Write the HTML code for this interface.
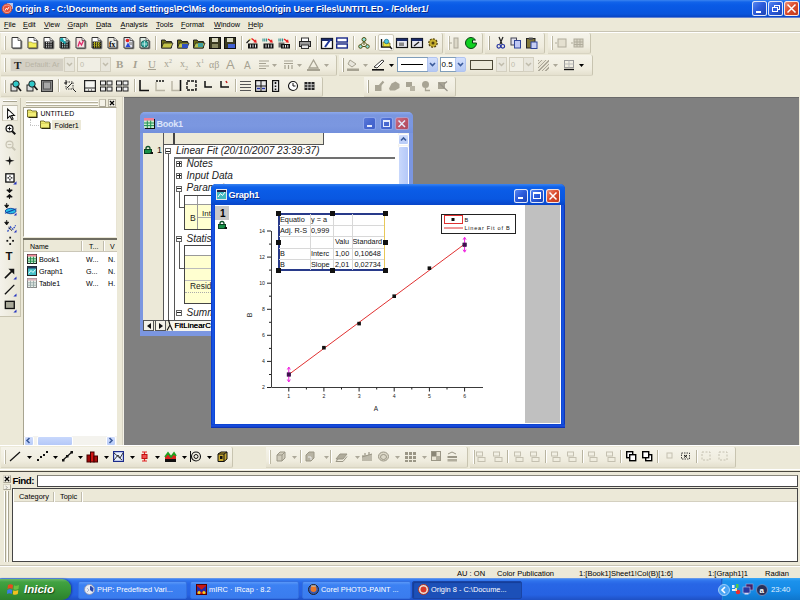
<!DOCTYPE html>
<html><head><meta charset="utf-8"><title>Origin 8</title>
<style>
html,body{margin:0;padding:0}
body{width:800px;height:600px;position:relative;overflow:hidden;background:#ECE9D8;font-family:"Liberation Sans",sans-serif}
body>div,body>span,body>svg{position:absolute;display:block}
span{white-space:nowrap}
svg{overflow:visible}
sup,sub{line-height:0}
</style></head><body>
<div style="left:0px;top:0px;width:800px;height:18px;background:linear-gradient(#3a84f0 0,#1264ea 2px,#0a5be6 5px,#0957e1 11px,#0a55dc 14px,#0848c8 16.500px,#0a40b8 17px,#5a7cd0 17.050px,#6a88d4 18px)"></div>
<svg style="left:2px;top:3px" width="11" height="11" viewBox="0 0 11 11"><rect x="5" y="0" width="6" height="6" fill="#b8c8f0"/><circle cx="5" cy="5.800" r="4.800" fill="#f0a090" stroke="#d04830" stroke-width="1"/><circle cx="5" cy="5.800" r="3.300" fill="#e85038"/><path d="M3 7.500 L4.500 5 L5.500 6.500 L7 4" stroke="#fff" stroke-width=".9" fill="none"/></svg>
<span style="left:15px;top:3.0px;font-size:8.98px;line-height:12px;color:#fff;font-weight:bold;text-shadow:1px 1px 0 #0a2a8a">Origin 8 - C:\Documents and Settings\PC\Mis documentos\Origin User Files\UNTITLED - /Folder1/</span>
<div style="left:752px;top:1px;width:15px;height:15px;background:linear-gradient(135deg,#5888f0,#2c5cdc 45%,#1c44b4);border:1px solid rgba(255,255,255,.85);border-radius:2.5px;box-sizing:border-box;"></div>
<div style="left:755.5px;top:10.5px;width:5px;height:2px;background:#fff"></div>
<div style="left:768px;top:1px;width:15px;height:15px;background:linear-gradient(135deg,#5888f0,#2c5cdc 45%,#1c44b4);border:1px solid rgba(255,255,255,.85);border-radius:2.5px;box-sizing:border-box;"></div>
<div style="left:773.5px;top:4.5px;width:6px;height:5px;border:1px solid #fff;border-top:1.500px solid #fff;box-sizing:border-box"></div>
<div style="left:771.5px;top:7px;width:6px;height:5px;border:1px solid #fff;border-top:1.500px solid #fff;box-sizing:border-box;background:#2c5cdc"></div>
<div style="left:784px;top:1px;width:15px;height:15px;background:linear-gradient(135deg,#ec9078,#dc4c2c 45%,#c03a1c);border:1px solid rgba(255,255,255,.85);border-radius:2.5px;box-sizing:border-box;"></div>
<svg style="left:787px;top:4px" width="9" height="9" viewBox="0 0 9 9"><path d="M.5 .5 L8.5 8.5 M8.5 .5 L.5 8.5" stroke="#fff" stroke-width="1.500"/></svg>
<div style="left:0px;top:18px;width:800px;height:14px;background:#ECE9D8"></div>
<span style="left:4px;top:19.0px;font-size:7.3px;line-height:11px;color:#000"><u style="text-decoration-thickness:.7px;text-decoration-color:#444">F</u>ile</span>
<span style="left:23px;top:19.0px;font-size:7.3px;line-height:11px;color:#000"><u style="text-decoration-thickness:.7px;text-decoration-color:#444">E</u>dit</span>
<span style="left:44px;top:19.0px;font-size:7.3px;line-height:11px;color:#000"><u style="text-decoration-thickness:.7px;text-decoration-color:#444">V</u>iew</span>
<span style="left:67.5px;top:19.0px;font-size:7.3px;line-height:11px;color:#000"><u style="text-decoration-thickness:.7px;text-decoration-color:#444">G</u>raph</span>
<span style="left:96px;top:19.0px;font-size:7.3px;line-height:11px;color:#000"><u style="text-decoration-thickness:.7px;text-decoration-color:#444">D</u>ata</span>
<span style="left:120.5px;top:19.0px;font-size:7.3px;line-height:11px;color:#000"><u style="text-decoration-thickness:.7px;text-decoration-color:#444">A</u>nalysis</span>
<span style="left:156px;top:19.0px;font-size:7.3px;line-height:11px;color:#000"><u style="text-decoration-thickness:.7px;text-decoration-color:#444">T</u>ools</span>
<span style="left:181px;top:19.0px;font-size:7.3px;line-height:11px;color:#000"><u style="text-decoration-thickness:.7px;text-decoration-color:#444">F</u>ormat</span>
<span style="left:214px;top:19.0px;font-size:7.3px;line-height:11px;color:#000"><u style="text-decoration-thickness:.7px;text-decoration-color:#444">W</u>indow</span>
<span style="left:248px;top:19.0px;font-size:7.3px;line-height:11px;color:#000"><u style="text-decoration-thickness:.7px;text-decoration-color:#444">H</u>elp</span>
<div style="left:0px;top:31px;width:800px;height:1px;background:#c8c4b4"></div>
<div style="left:0px;top:32px;width:800px;height:1px;background:#fff"></div>
<div style="left:0px;top:33px;width:800px;height:64px;background:#ECE9D8"></div>
<div style="left:1px;top:33px;width:442px;height:21px;background:linear-gradient(#f5f3ea,#efecde 70%,#e4e0ce);border-right:1px solid #c8c4b0;border-bottom:1px solid #d8d4c2;box-sizing:border-box;border-radius:0 2px 2px 0"></div>
<div style="left:4px;top:36px;width:1px;height:14px;background:#fff;border-right:1px solid #bcb8a4"></div>
<div style="left:445px;top:33px;width:38px;height:21px;background:linear-gradient(#f5f3ea,#efecde 70%,#e4e0ce);border-right:1px solid #c8c4b0;border-bottom:1px solid #d8d4c2;box-sizing:border-box;border-radius:0 2px 2px 0"></div>
<div style="left:448px;top:36px;width:1px;height:14px;background:#fff;border-right:1px solid #bcb8a4"></div>
<div style="left:485px;top:33px;width:60px;height:21px;background:linear-gradient(#f5f3ea,#efecde 70%,#e4e0ce);border-right:1px solid #c8c4b0;border-bottom:1px solid #d8d4c2;box-sizing:border-box;border-radius:0 2px 2px 0"></div>
<div style="left:488px;top:36px;width:1px;height:14px;background:#fff;border-right:1px solid #bcb8a4"></div>
<div style="left:548px;top:33px;width:43px;height:21px;background:linear-gradient(#f5f3ea,#efecde 70%,#e4e0ce);border-right:1px solid #c8c4b0;border-bottom:1px solid #d8d4c2;box-sizing:border-box;border-radius:0 2px 2px 0"></div>
<div style="left:551px;top:36px;width:1px;height:14px;background:#fff;border-right:1px solid #bcb8a4"></div>
<div style="left:488px;top:36px;width:1px;height:14px;background:#fff;border-right:1px solid #a8a490"></div>
<div style="left:1px;top:55px;width:336px;height:21px;background:linear-gradient(#f5f3ea,#efecde 70%,#e4e0ce);border-right:1px solid #c8c4b0;border-bottom:1px solid #d8d4c2;box-sizing:border-box;border-radius:0 2px 2px 0"></div>
<div style="left:4px;top:58px;width:1px;height:14px;background:#fff;border-right:1px solid #bcb8a4"></div>
<div style="left:339px;top:55px;width:254px;height:21px;background:linear-gradient(#f5f3ea,#efecde 70%,#e4e0ce);border-right:1px solid #c8c4b0;border-bottom:1px solid #d8d4c2;box-sizing:border-box;border-radius:0 2px 2px 0"></div>
<div style="left:342px;top:58px;width:1px;height:14px;background:#fff;border-right:1px solid #bcb8a4"></div>
<div style="left:342px;top:58px;width:1px;height:14px;background:#fff;border-right:1px solid #a8a490"></div>
<div style="left:1px;top:77px;width:322px;height:20px;background:linear-gradient(#f5f3ea,#efecde 70%,#e4e0ce);border-right:1px solid #c8c4b0;border-bottom:1px solid #d8d4c2;box-sizing:border-box;border-radius:0 2px 2px 0"></div>
<div style="left:4px;top:80px;width:1px;height:13px;background:#fff;border-right:1px solid #bcb8a4"></div>
<div style="left:364px;top:77px;width:92px;height:20px;background:linear-gradient(#f5f3ea,#efecde 70%,#e4e0ce);border-right:1px solid #c8c4b0;border-bottom:1px solid #d8d4c2;box-sizing:border-box;border-radius:0 2px 2px 0"></div>
<div style="left:367px;top:80px;width:1px;height:13px;background:#fff;border-right:1px solid #bcb8a4"></div>
<div style="left:367px;top:80px;width:1px;height:13px;background:#fff;border-right:1px solid #a8a490"></div>
<svg style="left:11px;top:37px" width="12" height="12" viewBox="0 0 12 12"><path d="M10.800 4 V11.700 H2" stroke="#666" fill="none" stroke-width="1"/><path d="M1 .5 H7 L10 3.500 V11 H1Z" fill="#fff" stroke="#333" stroke-width="1"/><path d="M7 .5 V3.500 H10" fill="#e0e0e0" stroke="#333" stroke-width=".7"/></svg>
<svg style="left:27px;top:37px" width="12" height="12" viewBox="0 0 12 12"><path d="M10.800 4 V11.700 H2" stroke="#666" fill="none" stroke-width="1"/><path d="M1 .5 H7 L10 3.500 V11 H1Z" fill="#fff" stroke="#333" stroke-width="1"/><path d="M7 .5 V3.500 H10" fill="#e0e0e0" stroke="#333" stroke-width=".7"/><path d="M1.500 5 H4.500 L5.500 6 H9.500 V10.500 H1.500Z" fill="#f2ee5c" stroke="#8a8220" stroke-width=".6"/></svg>
<svg style="left:43px;top:37px" width="12" height="12" viewBox="0 0 12 12"><path d="M10.800 4 V11.700 H2" stroke="#666" fill="none" stroke-width="1"/><path d="M1 .5 H7 L10 3.500 V11 H1Z" fill="#fff" stroke="#333" stroke-width="1"/><path d="M7 .5 V3.500 H10" fill="#e0e0e0" stroke="#333" stroke-width=".7"/><rect x="1.500" y="4.500" width="8.500" height="6.500" fill="#1c1c1c"/><path d="M3.600 5 V11 M5.800 5 V11 M8 5 V11" stroke="#e8e8e8" stroke-width="1" stroke-dasharray="1.300 .8"/></svg>
<svg style="left:59px;top:37px" width="12" height="12" viewBox="0 0 12 12"><path d="M10.800 4 V11.700 H2" stroke="#666" fill="none" stroke-width="1"/><path d="M1 .5 H7 L10 3.500 V11 H1Z" fill="#dff" stroke="#333" stroke-width="1"/><path d="M7 .5 V3.500 H10" fill="#e0e0e0" stroke="#333" stroke-width=".7"/><rect x="1.500" y="4.500" width="8.500" height="6.500" fill="#1c1c1c"/><path d="M3.600 5 V11 M5.800 5 V11 M8 5 V11" stroke="#d0f0f0" stroke-width="1" stroke-dasharray="1.300 .8"/><path d="M1.500 1.500 L6.500 6.500 M1.500 4 L4 1.500" stroke="#18a8b0" stroke-width="1.800"/></svg>
<svg style="left:75px;top:37px" width="12" height="12" viewBox="0 0 12 12"><path d="M10.800 4 V11.700 H2" stroke="#666" fill="none" stroke-width="1"/><path d="M1 .5 H7 L10 3.500 V11 H1Z" fill="#f4e4e4" stroke="#333" stroke-width="1"/><path d="M7 .5 V3.500 H10" fill="#e0e0e0" stroke="#333" stroke-width=".7"/><path d="M3 9.500 L4.500 5 L6.500 8 L8.500 3.500" stroke="#e02868" stroke-width="1.300" fill="none"/><path d="M2 10.500 H9.500" stroke="#999"/></svg>
<svg style="left:91px;top:37px" width="12" height="12" viewBox="0 0 12 12"><path d="M10.800 4 V11.700 H2" stroke="#666" fill="none" stroke-width="1"/><path d="M1 .5 H7 L10 3.500 V11 H1Z" fill="#fff" stroke="#333" stroke-width="1"/><path d="M7 .5 V3.500 H10" fill="#e0e0e0" stroke="#333" stroke-width=".7"/><rect x="1.500" y="4.500" width="8.500" height="6.500" fill="#1c1c1c"/><path d="M3.600 5 V11 M5.800 5 V11 M8 5 V11" stroke="#e8e020" stroke-width="1" stroke-dasharray="1.300 .8"/><path d="M2.500 6.500 H9.500 M2.500 8.500 H9.500" stroke="#e8e020" stroke-width=".8" stroke-dasharray="1.200 1"/></svg>
<svg style="left:107px;top:37px" width="12" height="12" viewBox="0 0 12 12"><path d="M10.800 4 V11.700 H2" stroke="#666" fill="none" stroke-width="1"/><path d="M1 .5 H7 L10 3.500 V11 H1Z" fill="#ecebe4" stroke="#333" stroke-width="1"/><path d="M7 .5 V3.500 H10" fill="#e0e0e0" stroke="#333" stroke-width=".7"/><text x="2" y="9.500" font-size="7.500" font-weight="bold" font-family="Liberation Serif,serif" fill="#000">fx</text></svg>
<svg style="left:123px;top:37px" width="12" height="12" viewBox="0 0 12 12"><path d="M10.800 4 V11.700 H2" stroke="#666" fill="none" stroke-width="1"/><path d="M1 .5 H7 L10 3.500 V11 H1Z" fill="#e4e4f0" stroke="#333" stroke-width="1"/><path d="M7 .5 V3.500 H10" fill="#e0e0e0" stroke="#333" stroke-width=".7"/><circle cx="4.500" cy="3.500" r="1.800" fill="#e82020"/><path d="M2.500 10 L5 5.500 L7.500 10Z" fill="#2848d8"/><rect x="6" y="5" width="3" height="3" fill="#aaa"/></svg>
<svg style="left:139px;top:37px" width="12" height="12" viewBox="0 0 12 12"><path d="M10.800 4 V11.700 H2" stroke="#666" fill="none" stroke-width="1"/><path d="M1 .5 H7 L10 3.500 V11 H1Z" fill="#e0ece4" stroke="#333" stroke-width="1"/><path d="M7 .5 V3.500 H10" fill="#e0e0e0" stroke="#333" stroke-width=".7"/><circle cx="5.500" cy="7" r="3.300" fill="#38b0a8" stroke="#186860"/><path d="M2.500 7 H8.500 M5.500 4 V10" stroke="#d8f0ec" stroke-width=".7"/></svg>
<div style="left:155px;top:36px;width:1px;height:14px;background:#b8b4a0;border-right:1px solid #fff"></div>
<svg style="left:161px;top:37px" width="12" height="12" viewBox="0 0 12 12"><path d="M.5 3 H4 L5 4.5 H10.5 V11 H.5Z" fill="#6c6c14" stroke="#222"/><path d="M2.5 6 H12 L10 11 H.5Z" fill="#c4c448" stroke="#222" stroke-width=".8"/></svg>
<svg style="left:177px;top:37px" width="12" height="12" viewBox="0 0 12 12"><path d="M.5 3 H4 L5 4.5 H10.5 V11 H.5Z" fill="#6c6c14" stroke="#222"/><path d="M2.5 6 H12 L10 11 H.5Z" fill="#c4c448" stroke="#222" stroke-width=".8"/><rect x="5" y="7" width="6" height="4" fill="#3050c0"/></svg>
<svg style="left:193px;top:37px" width="12" height="12" viewBox="0 0 12 12"><path d="M.5 3 H4 L5 4.5 H10.5 V11 H.5Z" fill="#6c6c14" stroke="#222"/><path d="M2.5 6 H12 L10 11 H.5Z" fill="#b4c050" stroke="#222" stroke-width=".8"/><rect x="5" y="6" width="5" height="4" fill="#40a0a0"/></svg>
<svg style="left:209px;top:37px" width="12" height="12" viewBox="0 0 12 12"><rect x=".5" y=".5" width="11" height="11" fill="#3a3a20" stroke="#111"/><rect x="3" y="1" width="6" height="4" fill="#d8d8c0"/><rect x="3" y="7" width="6" height="4" fill="#888860"/></svg>
<svg style="left:224px;top:37px" width="12" height="12" viewBox="0 0 12 12"><rect x=".5" y=".5" width="11" height="11" fill="#3a3a20" stroke="#111"/><rect x="3" y="1" width="6" height="4" fill="#d8d8c0"/><rect x="4" y="7" width="7" height="4" fill="#4060d0"/></svg>
<div style="left:241px;top:36px;width:1px;height:14px;background:#b8b4a0;border-right:1px solid #fff"></div>
<svg style="left:246px;top:37px" width="12" height="12" viewBox="0 0 12 12"><rect x="2" y="6.500" width="9.500" height="5" fill="#111"/><path d="M4.400 7.500 V10.500 M7 7.500 V10.500 M9.500 7.500 V10.500" stroke="#e8e8e8" stroke-width="1"/><path d="M5.500 1.500 L9.500 4.500" stroke="#e82020" stroke-width="1.500"/><path d="M10.800 5.800 L7.300 5.300 L10 2.300Z" fill="#e82020"/><path d="M.5 6 L4 2.500" stroke="#222" stroke-width="1.300"/><path d="M3.500 3 L4.500 2" stroke="#e8d020" stroke-width="1.300"/></svg>
<svg style="left:262px;top:37px" width="12" height="12" viewBox="0 0 12 12"><rect x="1.500" y="6.500" width="10" height="5" fill="#111"/><path d="M4 7.500 V10.500 M6.600 7.500 V10.500 M9.200 7.500 V10.500" stroke="#e8e8e8" stroke-width="1"/><path d="M6 2 L9.500 4.500" stroke="#e82020" stroke-width="1.500"/><path d="M10.800 5.800 L7.300 5.300 L10 2.300Z" fill="#e82020"/><path d="M1 1.500 V4.500 M2.800 1.500 V4.500 M4.600 1.500 V4.500" stroke="#208888" stroke-width="1"/></svg>
<svg style="left:278px;top:37px" width="12" height="12" viewBox="0 0 12 12"><rect x=".5" y="5.500" width="6" height="5" fill="#666"/><rect x="3" y="7" width="9" height="4.500" fill="#111"/><path d="M5.200 8 V10.500 M7.500 8 V10.500 M9.800 8 V10.500" stroke="#e8e8e8" stroke-width="1"/><path d="M6 2 L9.500 4.500" stroke="#e82020" stroke-width="1.500"/><path d="M10.800 5.800 L7.300 5.300 L10 2.300Z" fill="#e82020"/><path d="M1 1.500 V4.500 M2.800 1.500 V4.500 M4.600 1.500 V4.500" stroke="#208888" stroke-width="1"/></svg>
<div style="left:295px;top:36px;width:1px;height:14px;background:#b8b4a0;border-right:1px solid #fff"></div>
<svg style="left:299px;top:37px" width="12" height="12" viewBox="0 0 12 12"><rect x="2.5" y="1" width="7" height="4" fill="#fff" stroke="#333"/><rect x=".5" y="4.5" width="11" height="5" fill="#9a9a9a" stroke="#222"/><rect x="2.5" y="8" width="7" height="3.5" fill="#e8e8e8" stroke="#333"/></svg>
<div style="left:316px;top:36px;width:1px;height:14px;background:#b8b4a0;border-right:1px solid #fff"></div>
<svg style="left:321px;top:37px" width="12" height="12" viewBox="0 0 12 12"><rect x=".5" y="1.5" width="11" height="10" fill="#fff" stroke="#111" stroke-width="1.3"/><rect x=".5" y="1.5" width="11" height="2.5" fill="#1a2a6a"/><path d="M4 10 L9 3" stroke="#223a9a" stroke-width="2"/></svg>
<svg style="left:336px;top:37px" width="12" height="12" viewBox="0 0 12 12"><rect x=".7" y="1" width="10.6" height="4" fill="#fff" stroke="#1a2a8a" stroke-width="1.4"/><rect x=".7" y="7" width="10.6" height="4" fill="#fff" stroke="#1a2a8a" stroke-width="1.4"/></svg>
<div style="left:353px;top:36px;width:1px;height:14px;background:#b8b4a0;border-right:1px solid #fff"></div>
<svg style="left:358px;top:37px" width="12" height="12" viewBox="0 0 12 12"><path d="M6 4.500 L2.500 8 M6 4.500 L9.500 8 M6 4.500 V8" stroke="#505010"/><circle cx="6" cy="2.500" r="2" fill="#90e0d8" stroke="#505010"/><circle cx="2.500" cy="9.500" r="1.800" fill="#90e0d8" stroke="#505010"/><circle cx="9.500" cy="9.500" r="1.800" fill="#90e0d8" stroke="#505010"/><path d="M4.500 9.500 H7.500" stroke="#505010"/></svg>
<div style="left:375px;top:36px;width:1px;height:14px;background:#b8b4a0;border-right:1px solid #fff"></div>
<div style="left:378px;top:34px;width:16px;height:17px;background:#fdfdfb;border:1px solid #d0ccbc;border-radius:2px;box-sizing:border-box"></div>
<svg style="left:379px;top:36px" width="14" height="14" viewBox="0 0 14 14"><path d="M2.500 3 V11 H12" stroke="#111" stroke-width="1.300" fill="none"/><path d="M4 6 H6.500 L7.500 7 H11 V10.500 H4Z" fill="#e8e040" stroke="#666010" stroke-width=".7"/><circle cx="7.500" cy="5.500" r="2.200" fill="#48c8e0" stroke="#186080" stroke-width=".7"/><path d="M11 11 L13 13" stroke="#111" stroke-width="1.500"/></svg>
<svg style="left:396px;top:37px" width="12" height="12" viewBox="0 0 12 12"><rect x=".5" y="1.5" width="11" height="9" fill="#e8e8f0" stroke="#111" stroke-width="1.2"/><rect x=".5" y="1.5" width="11" height="2.5" fill="#1a2a6a"/><rect x="3" y="5.5" width="5" height="3.5" fill="#888"/></svg>
<svg style="left:411px;top:37px" width="12" height="12" viewBox="0 0 12 12"><rect x=".5" y="1.5" width="11" height="9" fill="#e8e8f0" stroke="#111" stroke-width="1.2"/><rect x=".5" y="1.5" width="11" height="2.5" fill="#1a2a6a"/><path d="M3 9 L8 5" stroke="#222" stroke-width="1.5"/></svg>
<svg style="left:427px;top:37px" width="12" height="12" viewBox="0 0 12 12"><circle cx="6" cy="6" r="4.2" fill="#c8b030" stroke="#504010" stroke-width="1.2" stroke-dasharray="2 1.2"/><circle cx="6" cy="6" r="1.5" fill="#504010"/></svg>
<svg style="left:449px;top:37px" width="12" height="12" viewBox="0 0 12 12"><rect x="5" y="1" width="4" height="10" fill="#dcd8c8" stroke="#aca899"/><path d="M0 6 H3" stroke="#aca899"/></svg>
<svg style="left:465px;top:37px" width="12" height="12" viewBox="0 0 12 12"><path d="M6 .5 A5.5 5.5 0 1 0 11.5 6 H7.5 V3 H10.5 A5.5 5.5 0 0 0 6 .5Z" fill="#10d020" stroke="#064010" stroke-width="1"/></svg>
<svg style="left:496px;top:37px" width="12" height="12" viewBox="0 0 12 12"><path d="M3 0 L6 7 M7 0 L4 7" stroke="#222" stroke-width="1.2"/><circle cx="2.8" cy="9.3" r="1.8" fill="none" stroke="#2030a0" stroke-width="1.2"/><circle cx="6.8" cy="9.3" r="1.8" fill="none" stroke="#2030a0" stroke-width="1.2"/></svg>
<svg style="left:510px;top:37px" width="12" height="12" viewBox="0 0 12 12"><rect x="1" y="1" width="5.500" height="7" fill="#e0e0ec" stroke="#445"/><rect x="4.500" y="3.500" width="6" height="7.500" fill="#c0c8f4" stroke="#30469a"/></svg>
<svg style="left:526px;top:37px" width="12" height="12" viewBox="0 0 12 12"><rect x=".5" y="1.500" width="8.500" height="9.500" fill="#807838" stroke="#222"/><rect x="2.800" y=".5" width="4" height="2.500" fill="#555"/><rect x="5" y="5" width="6" height="6.500" fill="#c8d0f4" stroke="#30469a"/></svg>
<svg style="left:555px;top:37px" width="12" height="12" viewBox="0 0 12 12"><rect x="3" y="2" width="8" height="8" fill="#e4e0d0" stroke="#b0ac9c"/><path d="M0 6 H2" stroke="#b0ac9c"/></svg>
<svg style="left:571px;top:37px" width="12" height="12" viewBox="0 0 12 12"><rect x="3" y="2" width="9" height="8" fill="#d8d4c4" stroke="#b0ac9c"/><path d="M3 5 H12 M3 7.5 H12 M6 2 V10 M9 2 V10" stroke="#b0ac9c"/><path d="M0 6 H2" stroke="#b0ac9c"/></svg>
<div style="left:10px;top:58px;width:54px;height:14px;background:#d4d0c4;border:1px solid #e6e3d6;box-sizing:border-box"></div>
<span style="left:14px;top:59px;font-size:11px;line-height:13px;font-family:'Liberation Serif',serif;font-weight:bold;color:#222">T</span>
<span style="left:25px;top:59.0px;font-size:7.4px;line-height:11px;color:#b8b4a4">Default: Ar</span>
<div style="left:64px;top:57px;width:11px;height:15px;background:#e8e6dc;border:1px solid #d4d0c0;box-sizing:border-box"></div>
<svg style="left:66px;top:62px" width="7" height="5" viewBox="0 0 7 5"><path d="M1 1 L3.5 3.5 L6 1" stroke="#c0bcac" stroke-width="1.5" fill="none"/></svg>
<div style="left:77px;top:57px;width:34px;height:15px;background:#f0eee4;border:1px solid #d0ccbc;box-sizing:border-box"></div>
<span style="left:80px;top:59.0px;font-size:7.4px;line-height:11px;color:#c0bcac">0</span>
<div style="left:100px;top:57px;width:11px;height:15px;background:#e8e6dc;border:1px solid #d4d0c0;box-sizing:border-box"></div>
<svg style="left:102px;top:62px" width="7" height="5" viewBox="0 0 7 5"><path d="M1 1 L3.5 3.5 L6 1" stroke="#c0bcac" stroke-width="1.5" fill="none"/></svg>
<span style="left:116px;top:58px;font-size:11px;line-height:13px;font-family:'Liberation Serif',serif;font-weight:bold;color:#a6a292">B</span>
<span style="left:133px;top:58px;font-size:11px;line-height:13px;font-family:'Liberation Serif',serif;font-weight:bold;font-style:italic;color:#a6a292">I</span>
<span style="left:148px;top:58px;font-size:11px;line-height:13px;font-family:'Liberation Serif',serif;color:#a6a292;text-decoration:underline">U</span>
<span style="left:164px;top:58px;font-size:10px;line-height:12px;font-family:'Liberation Serif',serif;color:#a6a292">x<sup style="font-size:6px">2</sup></span>
<span style="left:180px;top:58px;font-size:10px;line-height:12px;font-family:'Liberation Serif',serif;color:#a6a292">x<sub style="font-size:6px">2</sub></span>
<span style="left:196px;top:58px;font-size:10px;line-height:12px;font-family:'Liberation Serif',serif;color:#a6a292">x<sup style="font-size:6px">1</sup></span>
<span style="left:209px;top:59px;font-size:10px;line-height:12px;font-family:'Liberation Serif',serif;color:#a6a292">αβ</span>
<span style="left:226px;top:57px;font-size:13px;line-height:15px;color:#a6a292">A</span>
<span style="left:244px;top:60px;font-size:10px;line-height:12px;color:#a6a292">A</span>
<svg style="left:259px;top:60px" width="10" height="10" viewBox="0 0 10 10"><path d="M0 1 H10 M0 3.5 H7 M0 6 H10 M0 8.5 H7" stroke="#a6a292" stroke-width="1.2"/></svg>
<svg style="left:272px;top:64px" width="5" height="3" viewBox="0 0 5 3"><path d="M0 0 H5 L2.5 3Z" fill="#aca899"/></svg>
<svg style="left:284px;top:60px" width="9" height="10" viewBox="0 0 9 10"><path d="M0 1 H9 M0 3.5 H9 M1 5 V9 M4.5 5 V9 M8 5 V9" stroke="#a6a292" stroke-width="1.2"/></svg>
<svg style="left:297px;top:64px" width="5" height="3" viewBox="0 0 5 3"><path d="M0 0 H5 L2.5 3Z" fill="#aca899"/></svg>
<svg style="left:307px;top:59px" width="13" height="12" viewBox="0 0 13 12"><path d="M6.5 1 L11 9 H2Z" fill="none" stroke="#a6a292" stroke-width="1.3"/><rect x="0" y="10" width="13" height="2" fill="#a6a292"/></svg>
<svg style="left:324px;top:64px" width="5" height="3" viewBox="0 0 5 3"><path d="M0 0 H5 L2.5 3Z" fill="#aca899"/></svg>
<svg style="left:347px;top:59px" width="12" height="12" viewBox="0 0 12 12"><path d="M3 1 L9 5 L5 8 L1 5Z" fill="#e8e6dc" stroke="#a6a292"/><rect x="0" y="9.5" width="12" height="2.5" fill="#a6a292"/></svg>
<svg style="left:363px;top:64px" width="5" height="3" viewBox="0 0 5 3"><path d="M0 0 H5 L2.5 3Z" fill="#aca899"/></svg>
<svg style="left:372px;top:59px" width="13" height="12" viewBox="0 0 13 12"><path d="M2 8 L10 1 L12 2 L5 9Z" fill="#fff" stroke="#222" stroke-width=".9"/><rect x="0" y="10" width="12" height="1.6" fill="#111"/></svg>
<svg style="left:389px;top:64px" width="5" height="3" viewBox="0 0 5 3"><path d="M0 0 H5 L2.5 3Z" fill="#000"/></svg>
<div style="left:397px;top:57px;width:31px;height:15px;background:#fff;border:1px solid #7f9db9;box-sizing:border-box"></div>
<div style="left:401px;top:64px;width:22px;height:1px;background:#000"></div>
<div style="left:427px;top:57px;width:11px;height:15px;background:linear-gradient(#d4e0fc,#b4c8f4);border:1px solid #b0c4f0;box-sizing:border-box;border-radius:2px"></div>
<svg style="left:429px;top:62px" width="7" height="5" viewBox="0 0 7 5"><path d="M1 1 L3.5 3.5 L6 1" stroke="#3a5a9a" stroke-width="1.6" fill="none"/></svg>
<div style="left:440px;top:57px;width:17px;height:15px;background:#fff;border:1px solid #7f9db9;box-sizing:border-box"></div>
<span style="left:441.5px;top:58.5px;font-size:8px;line-height:12px;color:#000">0.5</span>
<div style="left:455px;top:57px;width:11px;height:15px;background:linear-gradient(#d4e0fc,#b4c8f4);border:1px solid #b0c4f0;box-sizing:border-box;border-radius:2px"></div>
<svg style="left:457px;top:62px" width="7" height="5" viewBox="0 0 7 5"><path d="M1 1 L3.5 3.5 L6 1" stroke="#3a5a9a" stroke-width="1.6" fill="none"/></svg>
<div style="left:470px;top:60px;width:23px;height:10px;background:#ece9d8;border:1.500px solid #4a4634;box-sizing:border-box"></div>
<div style="left:496px;top:57px;width:11px;height:15px;background:#e8e6dc;border:1px solid #d4d0c0;box-sizing:border-box"></div>
<svg style="left:498px;top:62px" width="7" height="5" viewBox="0 0 7 5"><path d="M1 1 L3.5 3.5 L6 1" stroke="#c0bcac" stroke-width="1.5" fill="none"/></svg>
<div style="left:509px;top:57px;width:25px;height:15px;background:#f0eee4;border:1px solid #d0ccbc;box-sizing:border-box"></div>
<span style="left:511px;top:59.0px;font-size:7.4px;line-height:11px;color:#c0bcac">0</span>
<div style="left:523px;top:57px;width:11px;height:15px;background:#e8e6dc;border:1px solid #d4d0c0;box-sizing:border-box"></div>
<svg style="left:525px;top:62px" width="7" height="5" viewBox="0 0 7 5"><path d="M1 1 L3.5 3.5 L6 1" stroke="#c0bcac" stroke-width="1.5" fill="none"/></svg>
<div style="left:538px;top:60px;width:11px;height:11px;background:repeating-linear-gradient(135deg,#aca899 0 1px,#e8e4d4 1px 2.5px)"></div>
<svg style="left:553px;top:64px" width="5" height="3" viewBox="0 0 5 3"><path d="M0 0 H5 L2.5 3Z" fill="#aca899"/></svg>
<svg style="left:564px;top:60px" width="10" height="11" viewBox="0 0 10 11"><rect x=".5" y=".5" width="9" height="7" fill="none" stroke="#999"/><path d="M5 .5 V7.5 M.5 4 H9.5" stroke="#bbb"/><path d="M0 9.5 H10" stroke="#111" stroke-width="1.4"/></svg>
<svg style="left:579px;top:64px" width="5" height="3" viewBox="0 0 5 3"><path d="M0 0 H5 L2.5 3Z" fill="#000"/></svg>
<svg style="left:10px;top:80px" width="12" height="12" viewBox="0 0 12 12"><rect x="1" y="4" width="6" height="7" fill="#ddd" stroke="#222"/><circle cx="6" cy="4" r="3.2" fill="#30c8c8" stroke="#222"/><path d="M7 6 L11 11" stroke="#111" stroke-width="1.6"/></svg>
<svg style="left:26px;top:80px" width="12" height="12" viewBox="0 0 12 12"><rect x="1" y="5" width="6" height="6" fill="#ddd" stroke="#222"/><circle cx="6" cy="4" r="3.2" fill="#30c8c8" stroke="#222"/><path d="M8 6 L11.5 10" stroke="#111" stroke-width="1.6"/></svg>
<svg style="left:41px;top:80px" width="12" height="12" viewBox="0 0 12 12"><rect x=".5" y=".5" width="11" height="11" fill="#8a8a8a" stroke="#333"/><rect x="2.5" y="2" width="7" height="7" fill="#a8a8a8" stroke="#555"/></svg>
<div style="left:58px;top:79px;width:1px;height:13px;background:#b8b4a0;border-right:1px solid #fff"></div>
<svg style="left:64px;top:80px" width="12" height="12" viewBox="0 0 12 12"><rect x="2" y="2" width="7" height="7" fill="none" stroke="#333" stroke-dasharray="1.5 1"/><path d="M0 3 H3 M2 0 V4 M9 9 L12 12 M3 8 L8 3" stroke="#222"/></svg>
<svg style="left:84px;top:80px" width="12" height="12" viewBox="0 0 12 12"><rect x=".6" y=".6" width="10.8" height="10.8" fill="#f4f4f0" stroke="#222" stroke-width="1.2"/><path d="M1 8 H11" stroke="#222"/><path d="M4 10 h1 M7 10 h1" stroke="#222"/></svg>
<svg style="left:100px;top:80px" width="13" height="12" viewBox="0 0 13 12"><rect x=".5" y="1" width="5" height="4" fill="#eee" stroke="#222"/><rect x="7" y="1" width="5" height="4" fill="#eee" stroke="#222"/><rect x=".5" y="7" width="5" height="4" fill="#eee" stroke="#222"/><rect x="7" y="7" width="5" height="4" fill="#eee" stroke="#222"/></svg>
<svg style="left:116px;top:80px" width="13" height="12" viewBox="0 0 13 12"><rect x=".5" y="1" width="5" height="4" fill="#eee" stroke="#222"/><rect x="7" y="1" width="5" height="4" fill="#eee" stroke="#222"/><rect x=".5" y="7" width="5" height="4" fill="#eee" stroke="#222"/><rect x="7" y="7" width="5" height="4" fill="#eee" stroke="#222"/></svg>
<div style="left:134px;top:79px;width:1px;height:13px;background:#b8b4a0;border-right:1px solid #fff"></div>
<svg style="left:139px;top:80px" width="12" height="12" viewBox="0 0 12 12"><path d="M1 0 V10.5 H10" stroke="#111" stroke-width="1.6" fill="none"/></svg>
<svg style="left:155px;top:80px" width="12" height="12" viewBox="0 0 12 12"><path d="M1 1 H10" stroke="#111" stroke-width="1.6" stroke-dasharray="2 1"/><path d="M1 2 V10.5 H10" stroke="#b8b4a4" stroke-width="1.4" fill="none"/></svg>
<svg style="left:171px;top:80px" width="12" height="12" viewBox="0 0 12 12"><path d="M1 1 V10.5 H9" stroke="#b8b4a4" stroke-width="1.4" fill="none"/><path d="M9.5 0 V11" stroke="#111" stroke-width="1.6"/></svg>
<svg style="left:186px;top:80px" width="12" height="12" viewBox="0 0 12 12"><rect x="1" y="1" width="9" height="9" fill="none" stroke="#111" stroke-width="1.4" stroke-dasharray="3 1"/></svg>
<svg style="left:204px;top:80px" width="9" height="9" viewBox="0 0 9 9"><path d="M1 1 V7 H8" stroke="#111" stroke-width="1.5" fill="none"/></svg>
<svg style="left:220px;top:80px" width="10" height="9" viewBox="0 0 10 9"><path d="M1 1 V7 H9" stroke="#111" stroke-width="1.5" fill="none"/><path d="M6 1 L7 3" stroke="#c02020" stroke-width="1.5"/></svg>
<div style="left:235px;top:79px;width:1px;height:13px;background:#b8b4a0;border-right:1px solid #fff"></div>
<svg style="left:240px;top:80px" width="12" height="12" viewBox="0 0 12 12"><path d="M0 1.5 H11 M0 4.5 H11 M0 7.5 H11 M0 10.5 H11" stroke="#555" stroke-width="1.2"/></svg>
<svg style="left:255px;top:80px" width="12" height="12" viewBox="0 0 12 12"><rect x=".6" y=".6" width="10.8" height="10.8" fill="#e8e8e8" stroke="#111" stroke-width="1.2"/><path d="M1 6 H11 M6 1 V11" stroke="#111"/><path d="M2 8.5 H5 M7 8.5 H10" stroke="#2030a0" stroke-width="1.4"/></svg>
<svg style="left:272px;top:80px" width="8" height="12" viewBox="0 0 8 12"><rect x=".6" y=".6" width="6" height="10.8" fill="#e8e8e8" stroke="#111" stroke-width="1.2"/><path d="M3.5 2 V4 M3.5 5.5 V7 M3.5 8.5 V10" stroke="#111" stroke-width="1.6"/></svg>
<svg style="left:288px;top:80px" width="11" height="12" viewBox="0 0 11 12"><circle cx="5" cy="6" r="4.5" fill="#fff" stroke="#111" stroke-width="1.1"/><path d="M5 3 V6 H7.5" stroke="#111" fill="none"/></svg>
<svg style="left:304px;top:80px" width="11" height="12" viewBox="0 0 11 12"><rect x=".5" y="2" width="10" height="8" fill="#222"/><path d="M.5 4.7 H10.5 M.5 7.3 H10.5 M3.8 2 V10 M7.2 2 V10" stroke="#ddd" stroke-width=".8"/></svg>
<svg style="left:374px;top:80px" width="11" height="12" viewBox="0 0 11 12"><rect x="1" y="5" width="6.500" height="6" fill="#a8a494"/><path d="M5 6.500 L9.500 1.500" stroke="#a8a494" stroke-width="2.200"/></svg>
<svg style="left:389px;top:80px" width="11" height="12" viewBox="0 0 11 12"><path d="M0 8.500 L2.500 3.500 L6.500 1.500 L10.500 4 V8 L6 10.500 H1Z" fill="#a8a494"/></svg>
<svg style="left:405px;top:80px" width="11" height="12" viewBox="0 0 11 12"><rect x="1" y="2" width="6" height="5" fill="#a8a494"/><rect x="5" y="6" width="5" height="5" fill="#b8b4a4"/></svg>
<svg style="left:421px;top:80px" width="11" height="12" viewBox="0 0 11 12"><circle cx="4.500" cy="4.500" r="3.500" fill="#a8a494"/><path d="M4.500 8 V10.500 H9" stroke="#a8a494" stroke-width="1.300" fill="none"/></svg>
<svg style="left:437px;top:80px" width="11" height="12" viewBox="0 0 11 12"><rect x="1" y="2" width="7" height="7" fill="#a8a494"/><path d="M2 3 L10.500 11 M7 4 L10 1.500" stroke="#98948a" stroke-width="1.200"/></svg>
<div style="left:0px;top:97px;width:800px;height:349px;background:#ECE9D8"></div>
<div style="left:124px;top:97px;width:674.5px;height:348px;background:#808080;border-top:1px solid #6a6a6a;box-sizing:border-box"></div>
<div style="left:122px;top:97px;width:2px;height:348px;background:#f4f2e8;border-left:1px solid #d8d4c4;box-sizing:border-box"></div>
<div style="left:0px;top:98px;width:21px;height:219px;background:linear-gradient(90deg,#f4f2ea,#e8e5d4);border-right:1px solid #c8c4b0;border-bottom:1px solid #c8c4b0;box-sizing:border-box"></div>
<div style="left:3px;top:100px;width:14px;height:1px;background:#fff;border-bottom:1px solid #a8a490"></div>
<div style="left:2px;top:105px;width:16px;height:16px;background:#faf9f4;border:1px solid #d8d4c4;border-top-color:#c0bcac;border-left-color:#c0bcac;box-sizing:border-box"></div>
<svg style="left:5px;top:107.5px" width="12" height="12" viewBox="0 0 14 14"><path d="M3 1 V12 L5.800 9.300 L7.800 13.500 L9.500 12.700 L7.500 8.700 H11Z" fill="#fff" stroke="#111" stroke-width="1.200"/></svg>
<svg style="left:4.5px;top:123.5px" width="11.5" height="11.5" viewBox="0 0 14 14"><circle cx="5.500" cy="5.500" r="4.200" fill="#fff" stroke="#111" stroke-width="1.500"/><path d="M3.300 5.500 H7.700 M5.500 3.300 V7.700" stroke="#111" stroke-width="1.200"/><path d="M8.800 8.800 L12.500 12.500" stroke="#111" stroke-width="2.400"/></svg>
<svg style="left:4.5px;top:139.5px" width="11.5" height="11.5" viewBox="0 0 14 14"><circle cx="5.500" cy="5.500" r="4.200" fill="none" stroke="#c8c4b4" stroke-width="1.500"/><path d="M3.300 5.500 H7.700" stroke="#c8c4b4" stroke-width="1.200"/><path d="M8.800 8.800 L12.500 12.500" stroke="#c8c4b4" stroke-width="2.400"/></svg>
<svg style="left:4.5px;top:155.5px" width="9.5" height="9.5" viewBox="0 0 14 14"><path d="M7 0 L8.300 5.700 L14 7 L8.300 8.300 L7 14 L5.700 8.300 L0 7 L5.700 5.700Z" fill="#111"/></svg>
<svg style="left:4.5px;top:172.5px" width="11.5" height="11.5" viewBox="0 0 14 14"><rect x="1" y="1" width="10" height="10" fill="#fff" stroke="#111" stroke-width="1.600"/><path d="M3 6 H9 M6 3 V9" stroke="#111" stroke-width="1.400" stroke-dasharray="2 2"/><path d="M14 10 V14 H10Z" fill="#2030c0"/></svg>
<svg style="left:4px;top:187.5px" width="11" height="11" viewBox="0 0 14 14"><path d="M7 0 V4 M3.500 2.500 L7 6 L10.500 2.500Z M7 14 V10 M3.500 11.500 L7 8 L10.500 11.500Z" stroke="#111" stroke-width="1.200" fill="#111"/></svg>
<svg style="left:4px;top:203px" width="12.5" height="12.5" viewBox="0 0 14 14"><path d="M3 0 V4 M.8 2.500 L3 5.500 L5.200 2.500Z" stroke="#111" stroke-width="1" fill="#111"/><ellipse cx="7.500" cy="9" rx="6" ry="3" fill="#28c0e8" stroke="#1040a0"/><path d="M1 11.500 L14 6.500" stroke="#1040a0" stroke-width="1.200"/><path d="M14 11 V14 H11Z" fill="#2030c0"/></svg>
<svg style="left:4px;top:219.5px" width="12.5" height="12.5" viewBox="0 0 14 14"><path d="M3 0 V4 M.8 2.500 L3 5.500 L5.200 2.500Z" stroke="#111" stroke-width="1" fill="#111"/><path d="M4 13 L7 7.500 L10 10.500 L13 6" stroke="#2040c0" stroke-width="1.400" fill="none" stroke-dasharray="2 1"/><path d="M5 8 L9 12" stroke="#111" stroke-width="1"/><path d="M14 11 V14 H11Z" fill="#2030c0"/></svg>
<svg style="left:4.5px;top:236px" width="10" height="10" viewBox="0 0 14 14"><rect x="6" y="1" width="2.500" height="2.500" fill="#111"/><rect x="2" y="5.500" width="2.500" height="2.500" fill="#111"/><rect x="10" y="5.500" width="2.500" height="2.500" fill="#111"/><rect x="6" y="10" width="2.500" height="2.500" fill="#111"/></svg>
<span style="left:5.5px;top:249.0px;font-size:11.5px;line-height:15px;font-weight:bold;color:#111">T</span>
<svg style="left:4px;top:267px" width="12.5" height="12.5" viewBox="0 0 14 14"><path d="M1 12.500 L10 3.500" stroke="#111" stroke-width="1.700"/><path d="M5 2 H11.500 V8.500Z" fill="#111"/><path d="M14 10.500 V14 H10.500Z" fill="#2030c0"/></svg>
<svg style="left:4px;top:283.5px" width="12.5" height="12.5" viewBox="0 0 14 14"><path d="M1 11.500 L11.500 1" stroke="#111" stroke-width="1.500"/><path d="M14 10.500 V14 H10.500Z" fill="#2030c0"/></svg>
<svg style="left:4px;top:300px" width="12.5" height="12.5" viewBox="0 0 14 14"><rect x="1.500" y="1.500" width="10" height="8" fill="#a8a898" stroke="#111" stroke-width="1.500"/><path d="M14 10.500 V14 H10.500Z" fill="#2030c0"/></svg>
<div style="left:22px;top:97px;width:100px;height:348px;background:#ECE9D8"></div>
<div style="left:26px;top:101px;width:72px;height:1px;background:#fff;border-bottom:1px solid #b4b09c"></div>
<div style="left:26px;top:104px;width:72px;height:1px;background:#fff;border-bottom:1px solid #b4b09c"></div>
<div style="left:98.5px;top:99px;width:7.5px;height:7.5px;background:#f4f2e8;border:1px solid #c8c4b4;border-right-color:#a8a494;border-bottom-color:#a8a494;box-sizing:border-box"></div>
<div style="left:107.5px;top:99px;width:8px;height:7.5px;background:#f4f2e8;border:1px solid #b8b4a4;box-sizing:border-box"></div>
<svg style="left:108.5px;top:100px" width="6" height="6" viewBox="0 0 6 6"><path d="M1 1 L5 5 M5 1 L1 5" stroke="#000" stroke-width="1.3"/></svg>
<div style="left:23px;top:107px;width:94px;height:130px;background:#fff;border:1px solid #a8a490;border-bottom-color:#fff;border-right-color:#e8e4d4;box-sizing:border-box"></div>
<svg style="left:27px;top:109px" width="11" height="9" viewBox="0 0 11 9"><path d="M1.500 2 H4.500 L5.500 3 H10.500 V9 H1.500Z" fill="#111"/><path d="M.5 1 H4 L5 2 H9.500 V8 H.5Z" fill="#f2ee78" stroke="#55500c" stroke-width=".8"/><path d="M.5 3.300 H9.500" stroke="#c8c040" stroke-width=".6"/></svg>
<span style="left:40.5px;top:109.0px;font-size:6.9px;line-height:10px;color:#000">UNTITLED</span>
<div style="left:30px;top:119px;width:1px;height:6px;border-left:1px dotted #c4c4c4"></div>
<div style="left:30px;top:125px;width:9px;height:1px;border-top:1px dotted #c4c4c4"></div>
<svg style="left:40px;top:120px" width="11" height="9" viewBox="0 0 11 9"><path d="M1.500 2 H4.500 L5.500 3 H10.500 V9 H1.500Z" fill="#111"/><path d="M.5 1 H4 L5 2 H9.500 V8 H.5Z" fill="#f2ee78" stroke="#55500c" stroke-width=".8"/><path d="M.5 3.300 H9.500" stroke="#c8c040" stroke-width=".6"/></svg>
<div style="left:52px;top:120px;width:29px;height:10px;background:#ece9d8"></div>
<span style="left:54.5px;top:119.5px;font-size:7.2px;line-height:11px;color:#000">Folder1</span>
<div style="left:23px;top:238px;width:94px;height:1.5px;background:#6e6c60"></div>
<div style="left:23px;top:239.5px;width:94px;height:206.5px;background:#fff;border-left:1px solid #a8a490;box-sizing:border-box"></div>
<div style="left:24px;top:240px;width:93px;height:12px;background:#ece9d8;border-bottom:1px solid #cbc7b8;box-sizing:border-box"></div>
<div style="left:81px;top:241px;width:1px;height:10px;background:#c0bcac;border-right:1px solid #fff"></div>
<div style="left:103px;top:241px;width:1px;height:10px;background:#c0bcac;border-right:1px solid #fff"></div>
<span style="left:30px;top:240.5px;font-size:7px;line-height:11px;color:#000">Name</span>
<span style="left:89px;top:240.5px;font-size:7px;line-height:11px;color:#000">T...</span>
<span style="left:110px;top:240.5px;font-size:7px;line-height:11px;color:#000">V</span>
<svg style="left:27px;top:254px" width="10" height="10" viewBox="0 0 10 10"><rect x=".5" y=".5" width="9" height="9" fill="#c4ecd0" stroke="#222"/><path d="M.5 4.800 H9.500 M.5 7.200 H9.500 M3.500 2.500 V9.500 M6.500 2.500 V9.500" stroke="#208848" stroke-width=".9"/><rect x=".5" y=".5" width="9" height="2" fill="#f08898"/></svg>
<span style="left:39px;top:254.1px;font-size:7.2px;line-height:11px;color:#000">Book1</span>
<span style="left:86px;top:254.1px;font-size:7.2px;line-height:11px;color:#000">W...</span>
<span style="left:108px;top:254.1px;font-size:7.2px;line-height:11px;color:#000">N.</span>
<svg style="left:27px;top:266px" width="10" height="10" viewBox="0 0 10 10"><rect x=".5" y=".5" width="9" height="9" fill="#48c0c8" stroke="#222"/><path d="M1.500 7.500 L4 4.500 L6 6.500 L8.500 3.500" stroke="#e8ffff" fill="none"/><rect x=".5" y=".5" width="9" height="2" fill="#223a5a"/></svg>
<span style="left:39px;top:266.1px;font-size:7.2px;line-height:11px;color:#000">Graph1</span>
<span style="left:86px;top:266.1px;font-size:7.2px;line-height:11px;color:#000">G...</span>
<span style="left:108px;top:266.1px;font-size:7.2px;line-height:11px;color:#000">N.</span>
<svg style="left:27px;top:278px" width="10" height="10" viewBox="0 0 10 10"><rect x=".5" y=".5" width="9" height="9" fill="#e8eee8" stroke="#888"/><path d="M.5 4.800 H9.500 M.5 7.200 H9.500 M3.500 2.500 V9.500 M6.500 2.500 V9.500" stroke="#9aa" stroke-width=".9"/><rect x=".5" y=".5" width="9" height="2" fill="#e0b0b8"/></svg>
<span style="left:39px;top:278.1px;font-size:7.2px;line-height:11px;color:#000">Table1</span>
<span style="left:86px;top:278.1px;font-size:7.2px;line-height:11px;color:#000">W...</span>
<span style="left:108px;top:278.1px;font-size:7.2px;line-height:11px;color:#000">H.</span>
<div style="left:24px;top:436px;width:93px;height:10px;background:#f4f3ee"></div>
<div style="left:24px;top:436px;width:10px;height:10px;background:linear-gradient(#d0dcfc,#b8ccf8);border:1px solid #fff;border-radius:2px;box-sizing:border-box"></div>
<svg style="left:25px;top:437px" width="7" height="7" viewBox="0 0 7 7"><path d="M4.5 1 L2 3.5 L4.5 6" stroke="#3a5a9a" stroke-width="1.6" fill="none"/></svg>
<div style="left:106px;top:436px;width:10px;height:10px;background:linear-gradient(#d0dcfc,#b8ccf8);border:1px solid #fff;border-radius:2px;box-sizing:border-box"></div>
<svg style="left:107px;top:437px" width="7" height="7" viewBox="0 0 7 7"><path d="M2.5 1 L5 3.5 L2.5 6" stroke="#3a5a9a" stroke-width="1.6" fill="none"/></svg>
<div style="left:37px;top:436px;width:36px;height:10px;background:linear-gradient(#c8d8fc,#b4c8f8);border:1px solid #fff;border-radius:2px;box-sizing:border-box"></div>
<div style="left:140px;top:112px;width:273px;height:224px;background:#7b96e0;border-radius:5px 5px 0 0"></div>
<div style="left:140px;top:112px;width:273px;height:21px;background:linear-gradient(#8eaaec 0,#7a96df 3px,#7b97e0 14px,#7390dc 21px);border-radius:5px 5px 0 0"></div>
<svg style="left:143.5px;top:117.5px" width="11" height="11" viewBox="0 0 11 11"><rect x="1" y="1" width="10" height="10" fill="#111"/><rect x="0" y="0" width="10" height="10" fill="#c8ecd0"/><rect x="0" y="0" width="10" height="2.6" fill="#f08098"/><path d="M0 5 H10 M0 7.600 H10 M3.300 2.600 V10 M6.700 2.600 V10" stroke="#209050" stroke-width="1"/></svg>
<span style="left:156.5px;top:117.5px;font-size:9px;line-height:13px;color:#dce4fa;font-weight:bold;letter-spacing:-.25px">Book1</span>
<div style="left:363px;top:116.5px;width:13px;height:13.5px;background:linear-gradient(135deg,#5a7ada,#4868d0 50%,#4060c8);border:1px solid rgba(170,190,245,.7);border-radius:2.5px;box-sizing:border-box;"></div>
<div style="left:366.5px;top:124.5px;width:5px;height:2px;background:#e4eafc"></div>
<div style="left:379.5px;top:116.5px;width:13px;height:13.5px;background:linear-gradient(135deg,#5a7ada,#4868d0 50%,#4060c8);border:1px solid rgba(170,190,245,.7);border-radius:2.5px;box-sizing:border-box;"></div>
<div style="left:382.5px;top:120.0px;width:7px;height:6.5px;border:1px solid #e4eafc;border-top:2px solid #e4eafc;box-sizing:border-box"></div>
<div style="left:395px;top:116.5px;width:13.5px;height:13.5px;background:linear-gradient(135deg,#cc7084,#bc5468 50%,#b04a5e);border:1px solid rgba(170,190,245,.7);border-radius:2.5px;box-sizing:border-box;"></div>
<svg style="left:398px;top:119.5px" width="7.5" height="7.5" viewBox="0 0 7.5 7.5"><path d="M.5 .5 L7.0 7.0 M7.0 .5 L.5 7.0" stroke="#e4eafc" stroke-width="1.500"/></svg>
<div style="left:143px;top:133px;width:266px;height:198px;background:#fff"></div>
<div style="left:143px;top:133px;width:181px;height:11.5px;background:#ece9d8;border-bottom:1px solid #555;border-right:1.500px solid #555;box-sizing:border-box"></div>
<div style="left:143px;top:133px;width:21px;height:187px;background:#ece9d8;border-right:1px solid #555;box-sizing:border-box"></div>
<div style="left:164px;top:133px;width:11px;height:12px;background:#ece9d8;border-right:2px solid #444;border-bottom:1px solid #555;box-sizing:border-box"></div>
<div style="left:168px;top:154px;width:1px;height:166px;background:#555"></div>
<div style="left:174px;top:157px;width:1px;height:163px;background:#555"></div>
<svg style="left:144px;top:146px" width="9" height="8" viewBox="0 0 9 8"><path d="M2 4 V2.500 A2 2 0 0 1 6 2.500 V4" fill="none" stroke="#0a5028" stroke-width="1.300"/><rect x=".5" y="3.500" width="7" height="4" fill="#189048" stroke="#0a4020"/><rect x="6.500" y="6" width="2.500" height="2" fill="#111"/></svg>
<span style="left:157px;top:144.0px;font-size:9px;line-height:13px;color:#111">1</span>
<div style="left:165px;top:148px;width:6px;height:6px;border:1px solid #666;background:#fff;box-sizing:border-box"></div>
<div style="left:166px;top:150.5px;width:4px;height:1px;background:#222"></div>
<span style="left:176px;top:143.5px;font-size:10.05px;line-height:14px;font-style:italic;color:#222">Linear Fit (20/10/2007 23:39:37)</span>
<div style="left:174px;top:157px;width:221px;height:1.5px;background:#707070"></div>
<div style="left:176px;top:160.5px;width:6px;height:6px;border:1px solid #666;background:#fff;box-sizing:border-box"></div>
<div style="left:177px;top:163.0px;width:4px;height:1px;background:#222"></div>
<div style="left:178.5px;top:161.5px;width:1px;height:4px;background:#222"></div>
<span style="left:186.5px;top:156.5px;font-size:10.05px;line-height:14px;font-style:italic;color:#222">Notes</span>
<div style="left:176px;top:172.5px;width:6px;height:6px;border:1px solid #666;background:#fff;box-sizing:border-box"></div>
<div style="left:177px;top:175.0px;width:4px;height:1px;background:#222"></div>
<div style="left:178.5px;top:173.5px;width:1px;height:4px;background:#222"></div>
<span style="left:186.5px;top:168.5px;font-size:10.05px;line-height:14px;font-style:italic;color:#222">Input Data</span>
<div style="left:176px;top:185.5px;width:6px;height:6px;border:1px solid #666;background:#fff;box-sizing:border-box"></div>
<div style="left:177px;top:188.0px;width:4px;height:1px;background:#222"></div>
<span style="left:186.5px;top:181.0px;font-size:10.05px;line-height:14px;font-style:italic;color:#222">Parameters</span>
<div style="left:178.5px;top:191.5px;width:1px;height:16px;background:#555"></div>
<div style="left:178.5px;top:207px;width:6px;height:1px;background:#555"></div>
<div style="left:184px;top:195px;width:100px;height:35px;background:#ffffd0;border:1px solid #444;box-sizing:border-box"></div>
<div style="left:185px;top:196px;width:98px;height:9px;background:#fff;border-bottom:1px solid #999;box-sizing:border-box"></div>
<div style="left:197px;top:196px;width:1px;height:33px;background:#999"></div>
<span style="left:190px;top:212.0px;font-size:8.5px;line-height:12px;color:#222">B</span>
<span style="left:202px;top:207.5px;font-size:8px;line-height:12px;color:#222">Intercept</span>
<div style="left:198px;top:217px;width:86px;height:1px;background:#aaa"></div>
<div style="left:176px;top:235.5px;width:6px;height:6px;border:1px solid #666;background:#fff;box-sizing:border-box"></div>
<div style="left:177px;top:238.0px;width:4px;height:1px;background:#222"></div>
<span style="left:186.5px;top:231.5px;font-size:10.05px;line-height:14px;font-style:italic;color:#222">Statistics</span>
<div style="left:178.5px;top:241.5px;width:1px;height:27px;background:#555"></div>
<div style="left:178.5px;top:268px;width:6px;height:1px;background:#555"></div>
<div style="left:184px;top:245px;width:100px;height:59px;background:#ffffd0;border:1px solid #444;box-sizing:border-box"></div>
<div style="left:185px;top:246px;width:98px;height:10px;background:#fff;border-bottom:1px solid #999;box-sizing:border-box"></div>
<div style="left:185px;top:268px;width:98px;height:1px;background:#bbb"></div>
<div style="left:185px;top:280px;width:98px;height:1px;background:#bbb"></div>
<div style="left:185px;top:292px;width:98px;height:1px;border-top:1px dotted #aaa"></div>
<span style="left:190px;top:279.5px;font-size:8.4px;line-height:12px;color:#222">Residual</span>
<div style="left:176px;top:309.5px;width:6px;height:6px;border:1px solid #666;background:#fff;box-sizing:border-box"></div>
<div style="left:177px;top:312.0px;width:4px;height:1px;background:#222"></div>
<span style="left:186.5px;top:305.5px;font-size:10.05px;line-height:14px;font-style:italic;color:#222">Summary</span>
<div style="left:398px;top:133px;width:11px;height:198px;background:#f4f3ee"></div>
<div style="left:398px;top:134px;width:11px;height:11px;background:linear-gradient(#d0dcfc,#b8ccf8);border:1px solid #fff;border-radius:2px;box-sizing:border-box"></div>
<svg style="left:400px;top:136px" width="7" height="7" viewBox="0 0 7 7"><path d="M1 4.5 L3.5 2 L6 4.5" stroke="#3a5a9a" stroke-width="1.6" fill="none"/></svg>
<div style="left:398px;top:146px;width:11px;height:60px;background:linear-gradient(90deg,#c8d8fc,#b4c8f8);border:1px solid #fff;border-radius:2px;box-sizing:border-box"></div>
<div style="left:143px;top:319.5px;width:266px;height:11.5px;background:#ece9d8;border-top:1px solid #555;box-sizing:border-box"></div>
<div style="left:170px;top:320.5px;width:120px;height:10.5px;background:#f6f5ee"></div>
<div style="left:143px;top:320px;width:11px;height:11px;background:#f4f2e8;border:1px solid #555;box-sizing:border-box"></div>
<svg style="left:146.5px;top:322.5px" width="5" height="6" viewBox="0 0 5 6"><path d="M4 0 V6 L0 3Z" fill="#111"/></svg>
<div style="left:154.5px;top:320px;width:11.5px;height:11px;background:#f4f2e8;border:1px solid #555;box-sizing:border-box"></div>
<svg style="left:158.5px;top:322.5px" width="5" height="6" viewBox="0 0 5 6"><path d="M0 0 V6 L4 3Z" fill="#111"/></svg>
<svg style="left:165px;top:320px" width="10" height="11" viewBox="0 0 10 11"><path d="M3.500 0 L5 5 L2 10.500 M5 5 L7.500 10.500" stroke="#111" fill="none" stroke-width="1.100"/></svg>
<span style="left:174.5px;top:320.0px;font-size:7.9px;line-height:11px;color:#000;text-shadow:0 0 .4px #000">FitLinearCurve1</span>
<div style="left:211px;top:184px;width:354px;height:244px;background:#0a40d0;border-radius:5px 5px 0 0"></div>
<div style="left:211px;top:184px;width:354px;height:21px;background:linear-gradient(#3a84f0 0,#1062ea 3px,#0a5be6 7px,#0957e1 15px,#0845c8 21px);border-radius:5px 5px 0 0"></div>
<div style="left:211px;top:205px;width:4px;height:223px;background:linear-gradient(90deg,#0a34c0,#1a5ae8 50%,#0a40d0)"></div>
<div style="left:561px;top:205px;width:4px;height:223px;background:linear-gradient(90deg,#0a40d0,#1a5ae8 50%,#0a2aa8)"></div>
<div style="left:211px;top:424px;width:354px;height:4px;background:linear-gradient(#0a40d0,#1a50e0 50%,#0a2aa8)"></div>
<svg style="left:216px;top:189px" width="11" height="11" viewBox="0 0 11 11"><rect x=".5" y=".5" width="10" height="10" fill="#40b8c0" stroke="#e8e8e8"/><path d="M2 8 L4.5 4.5 L6.5 6.5 L9 3" stroke="#fff" fill="none"/><rect x="1" y="1" width="9" height="2" fill="#224"/></svg>
<span style="left:228.5px;top:189.0px;font-size:9.2px;line-height:13px;color:#fff;font-weight:bold;letter-spacing:-.25px;text-shadow:1px 1px 0 #0a2a8a">Graph1</span>
<div style="left:514px;top:188.5px;width:14px;height:14px;background:linear-gradient(135deg,#5888f0,#2c5cdc 45%,#1c44b4);border:1px solid rgba(255,255,255,.85);border-radius:2.5px;box-sizing:border-box;"></div>
<div style="left:517.5px;top:197.0px;width:5px;height:2px;background:#fff"></div>
<div style="left:530px;top:188.5px;width:14px;height:14px;background:linear-gradient(135deg,#5888f0,#2c5cdc 45%,#1c44b4);border:1px solid rgba(255,255,255,.85);border-radius:2.5px;box-sizing:border-box;"></div>
<div style="left:533px;top:192.0px;width:8px;height:7px;border:1px solid #fff;border-top:2px solid #fff;box-sizing:border-box"></div>
<div style="left:546px;top:188.5px;width:14px;height:14px;background:linear-gradient(135deg,#ec9078,#dc4c2c 45%,#c03a1c);border:1px solid rgba(255,255,255,.85);border-radius:2.5px;box-sizing:border-box;"></div>
<svg style="left:549px;top:191.5px" width="8" height="8" viewBox="0 0 8 8"><path d="M.5 .5 L7.5 7.5 M7.5 .5 L.5 7.5" stroke="#fff" stroke-width="1.500"/></svg>
<div style="left:215px;top:205px;width:346px;height:219px;background:#fff"></div>
<div style="left:525px;top:205px;width:35px;height:218px;background:#c0c0c0"></div>
<div style="left:215px;top:205.5px;width:14px;height:14px;background:#c8c8c8"></div>
<span style="left:220px;top:206.5px;font-size:10px;line-height:14px;color:#000;font-weight:bold">1</span>
<svg style="left:218px;top:220.5px" width="9" height="8" viewBox="0 0 9 8"><path d="M2 4 V2.500 A2 2 0 0 1 6 2.500 V4" fill="none" stroke="#0a5028" stroke-width="1.300"/><rect x=".5" y="3.500" width="7" height="4" fill="#189048" stroke="#0a4020"/><rect x="6.500" y="6" width="2.500" height="2" fill="#111"/></svg>
<svg style="left:0;top:0" width="800" height="600" viewBox="0 0 800 600" font-family="Liberation Sans,sans-serif"><path d="M271.5 231 V387.5 H483" stroke="#3a3a3a" stroke-width="1" fill="none"/><path d="M267 387.5 H271" stroke="#222"/><text x="265" y="389.4" font-size="5.2" text-anchor="end" fill="#222">2</text><path d="M267 361.4 H271" stroke="#222"/><text x="265" y="363.3" font-size="5.2" text-anchor="end" fill="#222">4</text><path d="M267 335.3 H271" stroke="#222"/><text x="265" y="337.2" font-size="5.2" text-anchor="end" fill="#222">6</text><path d="M267 309.3 H271" stroke="#222"/><text x="265" y="311.2" font-size="5.2" text-anchor="end" fill="#222">8</text><path d="M267 283.2 H271" stroke="#222"/><text x="265" y="285.1" font-size="5.2" text-anchor="end" fill="#222">10</text><path d="M267 257.1 H271" stroke="#222"/><text x="265" y="259.0" font-size="5.2" text-anchor="end" fill="#222">12</text><path d="M267 231.0 H271" stroke="#222"/><text x="265" y="232.9" font-size="5.2" text-anchor="end" fill="#222">14</text><path d="M269 374.5 H271" stroke="#222"/><path d="M269 348.4 H271" stroke="#222"/><path d="M269 322.3 H271" stroke="#222"/><path d="M269 296.2 H271" stroke="#222"/><path d="M269 270.1 H271" stroke="#222"/><path d="M269 244.1 H271" stroke="#222"/><path d="M288.8 387.5 V391.5" stroke="#222"/><text x="288.8" y="397.600" font-size="5.2" text-anchor="middle" fill="#222">1</text><path d="M323.9 387.5 V391.5" stroke="#222"/><text x="323.9" y="397.600" font-size="5.2" text-anchor="middle" fill="#222">2</text><path d="M359.1 387.5 V391.5" stroke="#222"/><text x="359.1" y="397.600" font-size="5.2" text-anchor="middle" fill="#222">3</text><path d="M394.2 387.5 V391.5" stroke="#222"/><text x="394.2" y="397.600" font-size="5.2" text-anchor="middle" fill="#222">4</text><path d="M429.4 387.5 V391.5" stroke="#222"/><text x="429.4" y="397.600" font-size="5.2" text-anchor="middle" fill="#222">5</text><path d="M464.6 387.5 V391.5" stroke="#222"/><text x="464.6" y="397.600" font-size="5.2" text-anchor="middle" fill="#222">6</text><path d="M306.4 387.5 V389.5" stroke="#222"/><path d="M341.5 387.5 V389.5" stroke="#222"/><path d="M376.7 387.5 V389.5" stroke="#222"/><path d="M411.8 387.5 V389.5" stroke="#222"/><path d="M447.0 387.5 V389.5" stroke="#222"/><path d="M288.8 374.5 L464.6 244.1" stroke="#e03030" stroke-width="1"/><rect x="287.0" y="372.7" width="3.600" height="3.600" fill="#111"/><rect x="322.1" y="345.9" width="3.600" height="3.600" fill="#111"/><rect x="357.3" y="321.8" width="3.600" height="3.600" fill="#111"/><rect x="392.4" y="294.4" width="3.600" height="3.600" fill="#111"/><rect x="427.6" y="266.4" width="3.600" height="3.600" fill="#111"/><rect x="462.8" y="242.9" width="3.600" height="3.600" fill="#111"/><path d="M288.8 367.5 V381.5 M287.3 369.5 L288.8 367.0 L290.3 369.5 M287.3 379.5 L288.8 382.0 L290.3 379.5" stroke="#f020e0" fill="none" stroke-width="1"/><rect x="286.8" y="372.5" width="4" height="4" fill="#401050"/><path d="M464.6 237.7 V251.7 M463.1 239.7 L464.6 237.2 L466.1 239.7 M463.1 249.7 L464.6 252.2 L466.1 249.7" stroke="#f020e0" fill="none" stroke-width="1"/><rect x="462.6" y="242.7" width="4" height="4" fill="#401050"/><text x="376" y="410.500" font-size="6.500" text-anchor="middle" fill="#222">A</text><text transform="translate(252,315) rotate(-90)" font-size="7" text-anchor="middle" fill="#222">B</text><rect x="441.5" y="214.5" width="74" height="19" fill="#fff" stroke="#222"/><rect x="444.500" y="215.500" width="18" height="8" fill="#fff" stroke="#e03030"/><rect x="451.500" y="218" width="3" height="3" fill="#111"/><text x="464.500" y="221.500" font-size="5.600" fill="#111">B</text><path d="M444 228 H463" stroke="#e03030"/><text x="464.500" y="230.300" font-size="5.600" fill="#111" letter-spacing=".75">Linear Fit of B</text></svg>
<div style="left:278px;top:213px;width:107px;height:58px;background:#fff;border:2px solid #283a8a;border-right:1.500px solid #e8c858;box-sizing:border-box"></div>
<div style="left:279px;top:225px;width:105px;height:1px;background:#d8d8d8"></div>
<div style="left:279px;top:236px;width:105px;height:1px;background:#d8d8d8"></div>
<div style="left:279px;top:247.5px;width:105px;height:1px;background:#d8d8d8"></div>
<div style="left:279px;top:259px;width:105px;height:1px;background:#d8d8d8"></div>
<div style="left:309.5px;top:214px;width:1px;height:56px;background:#d8d8d8"></div>
<div style="left:333px;top:214px;width:1px;height:56px;background:#d8d8d8"></div>
<div style="left:351.5px;top:214px;width:1px;height:56px;background:#d8d8d8"></div>
<span style="left:280px;top:213.5px;font-size:7.3px;line-height:11px;color:#111">Equatio</span>
<span style="left:311px;top:213.5px;font-size:7.3px;line-height:11px;color:#111">y = a</span>
<span style="left:280px;top:224.5px;font-size:7.3px;line-height:11px;color:#111">Adj. R-S</span>
<span style="left:311px;top:224.5px;font-size:7.3px;line-height:11px;color:#111">0,999</span>
<span style="left:335px;top:236.0px;font-size:7.3px;line-height:11px;color:#111">Valu</span>
<span style="left:352.5px;top:236.0px;font-size:7.3px;line-height:11px;color:#111;width:31px;overflow:hidden">Standard</span>
<span style="left:280px;top:247.5px;font-size:7.3px;line-height:11px;color:#111">B</span>
<span style="left:311px;top:247.5px;font-size:7.3px;line-height:11px;color:#111">Interc</span>
<span style="left:335px;top:247.5px;font-size:7.3px;line-height:11px;color:#111">1,00</span>
<span style="left:354.5px;top:247.5px;font-size:7.3px;line-height:11px;color:#111">0,10648</span>
<span style="left:280px;top:258.5px;font-size:7.3px;line-height:11px;color:#111">B</span>
<span style="left:311px;top:258.5px;font-size:7.3px;line-height:11px;color:#111">Slope</span>
<span style="left:335px;top:258.5px;font-size:7.3px;line-height:11px;color:#111">2,01</span>
<span style="left:354.5px;top:258.5px;font-size:7.3px;line-height:11px;color:#111">0,02734</span>
<div style="left:276px;top:211px;width:5px;height:5px;background:#111"></div>
<div style="left:330px;top:211px;width:5px;height:5px;background:#111"></div>
<div style="left:383px;top:211px;width:5px;height:5px;background:#111"></div>
<div style="left:276px;top:240px;width:5px;height:5px;background:#111"></div>
<div style="left:383px;top:240px;width:5px;height:5px;background:#111"></div>
<div style="left:276px;top:268px;width:5px;height:5px;background:#111"></div>
<div style="left:330px;top:268px;width:5px;height:5px;background:#111"></div>
<div style="left:383px;top:268px;width:5px;height:5px;background:#111"></div>
<div style="left:0px;top:445px;width:800px;height:24px;background:#ECE9D8"></div>
<div style="left:0px;top:445px;width:800px;height:1px;background:#fff"></div>
<div style="left:1px;top:447px;width:232px;height:21px;background:linear-gradient(#f5f3ea,#efecde 70%,#e4e0ce);border-right:1px solid #c8c4b0;border-bottom:1px solid #d8d4c2;box-sizing:border-box;border-radius:0 2px 2px 0"></div>
<div style="left:4px;top:450px;width:1px;height:14px;background:#fff;border-right:1px solid #bcb8a4"></div>
<div style="left:266px;top:447px;width:202px;height:21px;background:linear-gradient(#f5f3ea,#efecde 70%,#e4e0ce);border-right:1px solid #c8c4b0;border-bottom:1px solid #d8d4c2;box-sizing:border-box;border-radius:0 2px 2px 0"></div>
<div style="left:269px;top:450px;width:1px;height:14px;background:#fff;border-right:1px solid #bcb8a4"></div>
<div style="left:470px;top:447px;width:266px;height:21px;background:linear-gradient(#f5f3ea,#efecde 70%,#e4e0ce);border-right:1px solid #c8c4b0;border-bottom:1px solid #d8d4c2;box-sizing:border-box;border-radius:0 2px 2px 0"></div>
<div style="left:473px;top:450px;width:1px;height:14px;background:#fff;border-right:1px solid #bcb8a4"></div>
<svg style="left:10px;top:451px" width="11" height="11" viewBox="0 0 11 11"><path d="M0 10 L10 1" stroke="#111" stroke-width="1.2"/></svg>
<svg style="left:27px;top:456px" width="5" height="3" viewBox="0 0 5 3"><path d="M0 0 H5 L2.5 3Z" fill="#000"/></svg>
<svg style="left:37px;top:451px" width="11" height="11" viewBox="0 0 11 11"><rect x="0" y="8" width="2" height="2" fill="#111"/><rect x="3" y="5" width="2" height="2" fill="#111"/><rect x="6" y="3" width="2" height="2" fill="#111"/><rect x="9" y="0" width="2" height="2" fill="#111"/></svg>
<svg style="left:53px;top:456px" width="5" height="3" viewBox="0 0 5 3"><path d="M0 0 H5 L2.5 3Z" fill="#000"/></svg>
<svg style="left:62px;top:451px" width="11" height="11" viewBox="0 0 11 11"><path d="M1 9 L10 1" stroke="#111" stroke-width="1.1"/><rect x="0" y="8" width="2.5" height="2.5" fill="#111"/><rect x="4" y="4" width="2.5" height="2.5" fill="#111"/><rect x="8.500" y="0" width="2.5" height="2.5" fill="#111"/></svg>
<svg style="left:78px;top:456px" width="5" height="3" viewBox="0 0 5 3"><path d="M0 0 H5 L2.5 3Z" fill="#000"/></svg>
<svg style="left:87px;top:451px" width="11" height="11" viewBox="0 0 11 11"><rect x="0" y="4" width="3.5" height="7" fill="#a00808" stroke="#400"/><rect x="3.5" y="1" width="3.5" height="10" fill="#d01414" stroke="#400"/><rect x="7" y="5" width="3.500" height="6" fill="#a80c0c" stroke="#400"/></svg>
<svg style="left:104px;top:456px" width="5" height="3" viewBox="0 0 5 3"><path d="M0 0 H5 L2.5 3Z" fill="#000"/></svg>
<svg style="left:113px;top:451px" width="11" height="11" viewBox="0 0 11 11"><rect x=".6" y=".6" width="9.8" height="9.800" fill="#e8f0ff" stroke="#1a2a8a" stroke-width="1.2"/><path d="M1 9 L5 4 L7 7 L10 2 M1 2 L9 9" stroke="#222" stroke-width=".9" fill="none"/></svg>
<svg style="left:130px;top:456px" width="5" height="3" viewBox="0 0 5 3"><path d="M0 0 H5 L2.5 3Z" fill="#000"/></svg>
<svg style="left:141px;top:451px" width="7" height="11" viewBox="0 0 7 11"><path d="M1 1 H6 M3.500 1 V10 M1 10 H6" stroke="#e02020" stroke-width="1.2"/><rect x="1" y="3.5" width="5" height="4" fill="#f05050" stroke="#c01010"/></svg>
<svg style="left:155px;top:456px" width="5" height="3" viewBox="0 0 5 3"><path d="M0 0 H5 L2.5 3Z" fill="#000"/></svg>
<svg style="left:165px;top:451px" width="11" height="11" viewBox="0 0 11 11"><path d="M0 11 V6 L3 2 L6 6 L9 2 L11 5 V11Z" fill="#e02020"/><path d="M0 6 L3 2 L6 6 L9 2 L11 5" stroke="#20a020" stroke-width="1.800" fill="none"/><rect x="0" y="8" width="11" height="3" fill="#111"/></svg>
<svg style="left:182px;top:456px" width="5" height="3" viewBox="0 0 5 3"><path d="M0 0 H5 L2.5 3Z" fill="#000"/></svg>
<svg style="left:190px;top:451px" width="11" height="11" viewBox="0 0 11 11"><circle cx="6" cy="5.500" r="4.5" fill="none" stroke="#111" stroke-width="1.1"/><circle cx="6" cy="5.5" r="2" fill="none" stroke="#111"/><path d="M.5 0 V11" stroke="#111"/></svg>
<svg style="left:207px;top:456px" width="5" height="3" viewBox="0 0 5 3"><path d="M0 0 H5 L2.5 3Z" fill="#000"/></svg>
<svg style="left:217px;top:451px" width="11" height="11" viewBox="0 0 11 11"><path d="M1 3 L4 1 H10 V8 L7 10.5 H1Z" fill="#c8a830" stroke="#111"/><path d="M1 3 H7 V10.500 M7 3 L10 1" stroke="#111" fill="none"/><rect x="3" y="5" width="2.5" height="3" fill="#111"/></svg>
<svg style="left:276px;top:451px" width="11" height="11" viewBox="0 0 11 11"><path d="M1 4 L4 1 H9 V7 L6 10 H1Z" fill="#d0ccbc" stroke="#9a9686"/><path d="M1 4 H6 V10 M6 4 L9 1" stroke="#9a9686" fill="none"/></svg>
<svg style="left:292px;top:456px" width="5" height="3" viewBox="0 0 5 3"><path d="M0 0 H5 L2.5 3Z" fill="#aca899"/></svg>
<svg style="left:305px;top:451px" width="11" height="11" viewBox="0 0 11 11"><path d="M1 4 L4 1 H9 V7 L6 10 H1Z" fill="#b8b4a4" stroke="#9a9686"/><path d="M3 6 H6 V9" stroke="#eee" fill="none"/></svg>
<svg style="left:324px;top:456px" width="5" height="3" viewBox="0 0 5 3"><path d="M0 0 H5 L2.5 3Z" fill="#aca899"/></svg>
<svg style="left:336px;top:451px" width="11" height="11" viewBox="0 0 11 11"><path d="M0 8 L4 3 H11 L7 8Z" fill="#b0ac9c" stroke="#9a9686"/><path d="M0 10.500 L2 8 M7 10.500 H0 M7 10.500 L11 5.500" stroke="#9a9686" fill="none"/></svg>
<svg style="left:355px;top:456px" width="5" height="3" viewBox="0 0 5 3"><path d="M0 0 H5 L2.5 3Z" fill="#aca899"/></svg>
<svg style="left:362px;top:451px" width="11" height="11" viewBox="0 0 11 11"><path d="M1 10 V4 M3 10 V2 M5 10 V4 M7 10 V1 M9 10 V3" stroke="#9a9686" stroke-width="1.200"/><path d="M0 6 L10 3" stroke="#9a9686"/></svg>
<svg style="left:378px;top:451px" width="11" height="11" viewBox="0 0 11 11"><ellipse cx="5.500" cy="5.500" rx="5" ry="4.500" fill="#dcd8c8" stroke="#9a9686"/><ellipse cx="5.500" cy="6" rx="3" ry="2.500" fill="none" stroke="#9a9686"/></svg>
<svg style="left:395px;top:456px" width="5" height="3" viewBox="0 0 5 3"><path d="M0 0 H5 L2.5 3Z" fill="#aca899"/></svg>
<svg style="left:405px;top:451px" width="11" height="11" viewBox="0 0 11 11"><path d="M0 1 H3 V4 H0Z M4 1 H7 V4 H4Z M8 1 H11 V4 H8Z M0 5 H3 V8 H0Z M4 5 H7 V8 H4Z M8 5 H11 V8 H8Z M0 9 H3 V11 H0Z M4 9 H7 V11 H4Z M8 9 H11 V11 H8Z" fill="#9a9686"/></svg>
<svg style="left:422px;top:456px" width="5" height="3" viewBox="0 0 5 3"><path d="M0 0 H5 L2.5 3Z" fill="#aca899"/></svg>
<svg style="left:431px;top:451px" width="11" height="11" viewBox="0 0 11 11"><rect x=".5" y=".5" width="9" height="9" fill="#e8e4d4" stroke="#9a9686"/><rect x="1" y="1" width="4.500" height="4.500" fill="#8a8676"/><rect x="5" y="5" width="4" height="4" fill="#b0ac9c"/></svg>
<svg style="left:447px;top:451px" width="11" height="11" viewBox="0 0 11 11"><path d="M1 3 L5 1 L9 3" stroke="#9a9686" fill="none"/><rect x=".5" y="5" width="9.500" height="2" fill="#9a9686"/><rect x=".5" y="8" width="9.500" height="2.500" fill="#b0ac9c"/></svg>
<div style="left:300px;top:450px;width:1px;height:13px;background:#b8b4a0;border-right:1px solid #fff"></div>
<div style="left:330px;top:450px;width:1px;height:13px;background:#b8b4a0;border-right:1px solid #fff"></div>
<svg style="left:476px;top:451px" width="10" height="11" viewBox="0 0 10 11"><rect x=".5" y="1" width="6" height="4" fill="none" stroke="#c4c0b0"/><rect x="2" y="6.500" width="7" height="4" fill="none" stroke="#c4c0b0"/></svg>
<svg style="left:493px;top:451px" width="10" height="11" viewBox="0 0 10 11"><rect x=".5" y="1" width="6" height="4" fill="none" stroke="#c4c0b0"/><rect x="2" y="6.500" width="7" height="4" fill="none" stroke="#c4c0b0"/></svg>
<svg style="left:514px;top:451px" width="10" height="11" viewBox="0 0 10 11"><rect x=".5" y="1" width="6" height="4" fill="none" stroke="#c4c0b0"/><rect x="2" y="6.500" width="7" height="4" fill="none" stroke="#c4c0b0"/></svg>
<svg style="left:530px;top:451px" width="10" height="11" viewBox="0 0 10 11"><rect x=".5" y="1" width="6" height="4" fill="none" stroke="#c4c0b0"/><rect x="2" y="6.500" width="7" height="4" fill="none" stroke="#c4c0b0"/></svg>
<svg style="left:551px;top:451px" width="10" height="11" viewBox="0 0 10 11"><rect x=".5" y="1" width="6" height="4" fill="none" stroke="#c4c0b0"/><rect x="2" y="6.500" width="7" height="4" fill="none" stroke="#c4c0b0"/></svg>
<svg style="left:567px;top:451px" width="10" height="11" viewBox="0 0 10 11"><rect x=".5" y="1" width="6" height="4" fill="none" stroke="#c4c0b0"/><rect x="2" y="6.500" width="7" height="4" fill="none" stroke="#c4c0b0"/></svg>
<svg style="left:588px;top:451px" width="10" height="11" viewBox="0 0 10 11"><rect x=".5" y="1" width="6" height="4" fill="none" stroke="#c4c0b0"/><rect x="2" y="6.500" width="7" height="4" fill="none" stroke="#c4c0b0"/></svg>
<svg style="left:606px;top:451px" width="10" height="11" viewBox="0 0 10 11"><rect x=".5" y="1" width="6" height="4" fill="none" stroke="#c4c0b0"/><rect x="2" y="6.500" width="7" height="4" fill="none" stroke="#c4c0b0"/></svg>
<div style="left:507px;top:450px;width:1px;height:13px;background:#b8b4a0;border-right:1px solid #fff"></div>
<div style="left:545px;top:450px;width:1px;height:13px;background:#b8b4a0;border-right:1px solid #fff"></div>
<div style="left:582px;top:450px;width:1px;height:13px;background:#b8b4a0;border-right:1px solid #fff"></div>
<div style="left:620px;top:450px;width:1px;height:13px;background:#b8b4a0;border-right:1px solid #fff"></div>
<div style="left:657px;top:450px;width:1px;height:13px;background:#b8b4a0;border-right:1px solid #fff"></div>
<div style="left:696px;top:450px;width:1px;height:13px;background:#b8b4a0;border-right:1px solid #fff"></div>
<svg style="left:626px;top:451px" width="11" height="11" viewBox="0 0 11 11"><rect x=".7" y=".7" width="6" height="6" fill="#fff" stroke="#000" stroke-width="1.4"/><rect x="3.700" y="3.7" width="6" height="6" fill="#fff" stroke="#000" stroke-width="1.4"/></svg>
<svg style="left:642px;top:451px" width="11" height="11" viewBox="0 0 11 11"><rect x="3.700" y="3.7" width="6" height="6" fill="#fff" stroke="#000" stroke-width="1.4"/><rect x=".7" y=".7" width="6" height="6" fill="#fff" stroke="#000" stroke-width="1.4"/></svg>
<svg style="left:666px;top:451px" width="8" height="11" viewBox="0 0 8 11"><rect x="1" y="2" width="5" height="5" fill="none" stroke="#c4c0b0"/></svg>
<svg style="left:681px;top:451px" width="10" height="11" viewBox="0 0 10 11"><rect x=".5" y="2" width="8" height="6" fill="none" stroke="#444" stroke-dasharray="1.5 1"/><path d="M3 4 L6 6.5 M6 4 L3 6.5" stroke="#111"/></svg>
<svg style="left:701px;top:451px" width="10" height="11" viewBox="0 0 10 11"><rect x="1" y="1" width="8" height="8" fill="none" stroke="#c4c0b0" stroke-dasharray="2 1.500"/></svg>
<svg style="left:718px;top:451px" width="10" height="11" viewBox="0 0 10 11"><rect x="1" y="1" width="8" height="8" fill="none" stroke="#c4c0b0" stroke-dasharray="2 1.500"/></svg>
<div style="left:0px;top:469px;width:800px;height:94px;background:#ECE9D8"></div>
<div style="left:0px;top:469px;width:800px;height:1px;background:#fff"></div>
<div style="left:2.5px;top:475px;width:8px;height:8px;border:1px solid #d8d4c4;border-right-color:#a8a494;border-bottom-color:#a8a494;box-sizing:border-box;background:#f4f2e8"></div>
<svg style="left:3.5px;top:476px" width="6" height="6" viewBox="0 0 6 6"><path d="M.8 .8 L5.200 5.200 M5.200 .8 L.8 5.200" stroke="#000" stroke-width="1.300"/></svg>
<div style="left:2.5px;top:484px;width:8px;height:6px;background:#f4f2e8;border:1px solid #d8d4c4;border-right-color:#a8a494;border-bottom-color:#a8a494;box-sizing:border-box"></div>
<svg style="left:5px;top:485.5px" width="3" height="3" viewBox="0 0 3 3"><path d="M.5 0 L2.500 1.500 L.5 3" stroke="#999" fill="none" stroke-width=".8"/></svg>
<div style="left:4px;top:491px;width:1px;height:71px;background:#fff;border-right:1px solid #a8a490"></div>
<div style="left:7px;top:491px;width:1px;height:71px;background:#fff;border-right:1px solid #a8a490"></div>
<span style="left:12.5px;top:473.5px;font-size:9.8px;line-height:13px;font-weight:bold;color:#000;letter-spacing:-.45px">Find:</span>
<div style="left:0px;top:470.5px;width:800px;height:1.5px;background:#4a483e"></div>
<div style="left:36.5px;top:475px;width:761.5px;height:12px;background:#fff;border:1px solid #444;border-top-color:#8a887c;box-sizing:border-box"></div>
<div style="left:12px;top:488px;width:786px;height:73.5px;background:#fff;border:1px solid #444;border-left-width:1.500px;box-sizing:border-box"></div>
<div style="left:13.5px;top:489px;width:783.5px;height:13px;background:#ece9d8;border-bottom:1px solid #d4d0c0;box-sizing:border-box"></div>
<div style="left:53px;top:492px;width:1px;height:10px;background:#c0bcac;border-right:1px solid #fff"></div>
<div style="left:81px;top:492px;width:1px;height:10px;background:#c0bcac;border-right:1px solid #fff"></div>
<span style="left:19px;top:491.0px;font-size:7.4px;line-height:11px;color:#000">Category</span>
<span style="left:60px;top:491.0px;font-size:7.4px;line-height:11px;color:#000">Topic</span>
<div style="left:0px;top:563px;width:800px;height:16px;background:#ECE9D8"></div>
<div style="left:0px;top:565px;width:800px;height:1px;background:#c8c4b4"></div>
<div style="left:0px;top:566px;width:800px;height:1px;background:#fff"></div>
<span style="left:457px;top:568.0px;font-size:7.55px;line-height:11px;color:#000">AU : ON</span>
<span style="left:497px;top:568.0px;font-size:7.55px;line-height:11px;color:#000">Color Publication</span>
<span style="left:579px;top:568.0px;font-size:7.55px;line-height:11px;color:#000">1:[Book1]Sheet1!Col(B)[1:6]</span>
<span style="left:708px;top:568.0px;font-size:7.55px;line-height:11px;color:#000">1:[Graph1]1</span>
<span style="left:765px;top:568.0px;font-size:7.55px;line-height:11px;color:#000">Radian</span>
<div style="left:0px;top:578px;width:800px;height:22px;background:linear-gradient(#8aa8e0 0,#3f86f4 1px,#2f72ec 3px,#2866e6 6px,#2662e2 17px,#1e50c4 22px)"></div>
<div style="left:0px;top:579px;width:71px;height:21px;background:linear-gradient(#6ab86a 0,#42a242 3px,#379637 11px,#2c802c 21px);border-radius:0 9px 9px 0;box-shadow:1px 0 2px #1a3a9a"></div>
<svg style="left:7px;top:583px" width="13" height="13" viewBox="0 0 13 13"><path d="M1 2 Q3.500 .5 6 2 L5.500 6 Q3 4.500 .5 6Z" fill="#e84a20"/><path d="M7 2.300 Q9.500 3.500 12 2 L11.500 6 Q9 7.500 6.500 6.300Z" fill="#6ac040"/><path d="M.3 7 Q3 5.500 5.300 7 L4.800 11 Q2.500 9.500 0 11Z" fill="#3a7ae8"/><path d="M6.300 7.300 Q9 8.500 11.300 7 L10.800 11 Q8.500 12.500 5.800 11.300Z" fill="#f0c020"/></svg>
<span style="left:24px;top:582.0px;font-size:11.5px;line-height:15px;color:#fff;font-weight:bold;font-style:italic;text-shadow:1px 1px 1px #1a4a1a">Inicio</span>
<div style="left:78px;top:581px;width:109px;height:18px;background:linear-gradient(#5a98f8,#3c81f3 3px,#3a7cee);border:1px solid #3470e0;border-radius:2px;box-sizing:border-box"></div>
<svg style="left:84px;top:584px" width="11" height="11" viewBox="0 0 11 11"><circle cx="5.500" cy="5.500" r="5" fill="#e8ecf4" stroke="#8a96b8"/><path d="M6 2 A3.500 3.500 0 0 1 8.500 8 L6 6Z" fill="#2a4ab0"/><path d="M3 4 L5 6 L3 8" stroke="#b0b8d0" fill="none"/></svg>
<span style="left:97px;top:584.0px;font-size:7.4px;line-height:11px;color:#fff">PHP: Predefined Vari...</span>
<div style="left:190px;top:581px;width:109px;height:18px;background:linear-gradient(#5a98f8,#3c81f3 3px,#3a7cee);border:1px solid #3470e0;border-radius:2px;box-sizing:border-box"></div>
<svg style="left:196px;top:584px" width="11" height="11" viewBox="0 0 11 11"><rect x=".5" y=".5" width="10" height="10" fill="#c81818" stroke="#500"/><path d="M2 9 V4 L5.500 7 L9 4 V9" stroke="#1828b0" stroke-width="1.800" fill="none"/><circle cx="3" cy="8.500" r="1.500" fill="#f0d020"/><circle cx="8" cy="8.500" r="1.500" fill="#f0d020"/></svg>
<span style="left:209px;top:584.0px;font-size:7.4px;line-height:11px;color:#fff">mIRC · IRcap · 8.2</span>
<div style="left:302px;top:581px;width:109px;height:18px;background:linear-gradient(#5a98f8,#3c81f3 3px,#3a7cee);border:1px solid #3470e0;border-radius:2px;box-sizing:border-box"></div>
<svg style="left:308px;top:584px" width="11" height="11" viewBox="0 0 11 11"><circle cx="5.500" cy="5.500" r="5" fill="#3858b0" stroke="#222" stroke-width="1"/><circle cx="5.500" cy="5" r="3" fill="#e87828"/><path d="M3 2 L8 2" stroke="#f0d8a0"/></svg>
<span style="left:321px;top:584.0px;font-size:7.4px;line-height:11px;color:#fff">Corel PHOTO-PAINT ...</span>
<div style="left:412px;top:581px;width:110px;height:18px;background:#1c50b8;border:1px solid #1a44a4;border-radius:2px;box-sizing:border-box;box-shadow:inset 1px 1px 1px #143c98"></div>
<svg style="left:418px;top:584px" width="11" height="11" viewBox="0 0 11 11"><circle cx="5.500" cy="5.500" r="5" fill="#e8e0d8" stroke="#b03020"/><circle cx="5.500" cy="5.500" r="3" fill="#d83828"/></svg>
<span style="left:431px;top:584.0px;font-size:7.4px;line-height:11px;color:#fff">Origin 8 - C:\Docume...</span>
<div style="left:722px;top:578px;width:78px;height:22px;background:linear-gradient(#3aa8f8 0,#1c92ec 3px,#1488e4 14px,#0f76cc 22px)"></div>
<div style="left:721px;top:579px;width:2px;height:21px;background:linear-gradient(90deg,#1a50c0,#2a90e8)"></div>
<svg style="left:717.5px;top:583.5px" width="12" height="12" viewBox="0 0 12 12"><circle cx="6" cy="6" r="5.500" fill="#4aa4f4" stroke="#b8dcfc" stroke-width=".8"/><path d="M7 3 L4 6 L7 9" stroke="#fff" stroke-width="1.600" fill="none"/></svg>
<svg style="left:731px;top:584px" width="10" height="11" viewBox="0 0 10 11"><rect x="1" y="1" width="2.500" height="3" fill="#e8f0f8"/><rect x="5" y="0" width="2.500" height="4" fill="#50c850"/><rect x="1" y="5" width="3" height="2" fill="#e8f0f8"/><circle cx="7" cy="8" r="2.300" fill="#e83030"/><rect x="4" y="4" width="2" height="3" fill="#f0e8a0"/></svg>
<svg style="left:743px;top:584px" width="11" height="11" viewBox="0 0 11 11"><rect x="3" y="0" width="7" height="6" fill="#40206a" stroke="#a8a8d0" stroke-width=".6"/><rect x="0" y="3" width="7" height="6" fill="#2838a0" stroke="#c8c8e8" stroke-width=".6"/><rect x="1.500" y="9" width="4" height="1.500" fill="#d8d8f0"/></svg>
<svg style="left:756px;top:583.5px" width="12" height="12" viewBox="0 0 12 12"><circle cx="6" cy="6" r="5.500" fill="#283058" stroke="#8090c0" stroke-width=".8"/><text x="3.500" y="9" font-size="8" font-weight="bold" fill="#fff" font-family="Liberation Sans,sans-serif">a</text></svg>
<span style="left:771px;top:584.0px;font-size:7.7px;line-height:11px;color:#e0f0ff">23:40</span>
</body></html>
